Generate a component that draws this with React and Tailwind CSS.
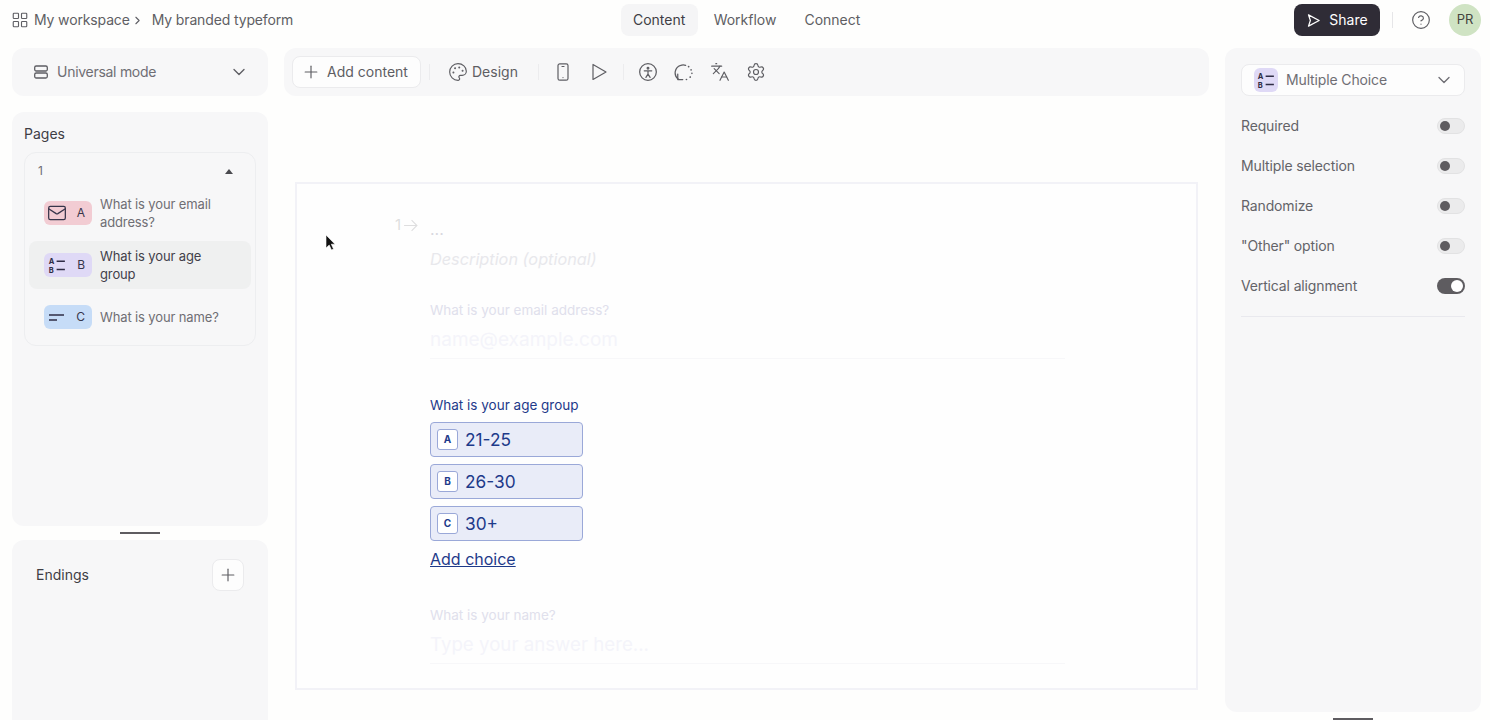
import { ChevronDown, ChevronRight, CircleHelp, Languages, LayoutGrid, Mail, Palette, Plus, Settings } from 'lucide-react';

const sans = 'font-["Inter",sans-serif]';

function AbIcon({ className = '' }) {
  return (
    <svg viewBox="0 0 24 24" className={className}>
      <text x="1" y="10.5" fontSize="10" fontWeight="700" fontFamily="Inter" fill="#2f2c45">A</text>
      <text x="1" y="22" fontSize="10" fontWeight="700" fontFamily="Inter" fill="#2f2c45">B</text>
      <path d="M11.5 7h11M11.5 18h11" stroke="#2f2c45" strokeWidth="1.9" />
    </svg>
  );
}

function PageRow({ color, letter, active, icon, children }) {
  return (
    <div className={`flex items-center gap-2 pl-[15px] pr-3 rounded-lg h-12 ${active ? 'bg-[#eff0f0] text-[#42404a]' : 'text-[#6f6e74]'}`}>
      <div className={`w-12 h-6 shrink-0 rounded-md flex items-center justify-between pl-[3px] pr-[7px] text-xs text-[#37354a] ${color}`}>
        {icon}
        <span>{letter}</span>
      </div>
      <span className="text-[13px] leading-[17.5px] tracking-[-0.01em] pt-px">{children}</span>
    </div>
  );
}

function Toggle({ label, on }) {
  return (
    <div className="flex items-center justify-between h-10 text-sm tracking-[-0.01em] text-[#636368]">
      <span>{label}</span>
      {on ? (
        <div className="w-7 h-4 rounded-full bg-[#5e5c60] flex items-center justify-end pr-[2px]">
          <div className="w-3 h-3 rounded-full bg-white" />
        </div>
      ) : (
        <div className="w-7 h-4 rounded-full bg-[#ebebec] border border-[#e2e2e3] flex items-center pl-[2px]">
          <div className="w-[10px] h-[10px] rounded-full bg-[#5e5c60]" />
        </div>
      )}
    </div>
  );
}

function Choice({ letter, children }) {
  return (
    <div className="w-[153px] h-[35px] rounded-[4px] border border-[#9aa8d8] bg-[#e9ecf8] flex items-center pl-[6px] gap-[7px] text-[#1e3a8a]">
      <span className="w-[21px] h-[21px] rounded-[3px] border border-[#9aa8d8] bg-white flex items-center justify-center text-[10px] font-bold">{letter}</span>
      <span className="text-[17.3px]">{children}</span>
    </div>
  );
}

function ToolDivider() {
  return <div className="w-px h-4 bg-[#ececee]" />;
}

export default function App() {
  return (
    <div className={`relative h-[720px] w-[1490px] overflow-hidden bg-[#fefefd] text-[#5e5e63] ${sans}`}>
      {/* top bar */}
      <header className="grid grid-cols-3 items-center h-10 mb-2 pl-3 pr-[9px]">
        <div className="flex items-center text-sm text-[#5f5f64] tracking-[-0.01em]">
          <LayoutGrid size={18} strokeWidth={1.5} className="mr-[5px] -ml-[1px]" />
          <span>My workspace</span>
          <ChevronRight size={13} strokeWidth={2} className="mx-[1px]" />
          <span className="ml-[7px]">My branded typeform</span>
        </div>
        <nav className="flex items-center justify-center gap-1 text-sm">
          <span className="h-8 w-[77px] justify-center rounded-lg bg-[#f5f5f6] flex items-center text-[#3f3e45]">Content</span>
          <span className="h-8 px-3 flex items-center">Workflow</span>
          <span className="h-8 px-3 flex items-center">Connect</span>
        </nav>
        <div className="flex items-center justify-end">
          <button className="h-8 w-[86px] rounded-lg bg-[#2f2c36] text-white text-sm flex items-center justify-center gap-2">
            <svg viewBox="0 0 24 24" className="w-[15px] h-[15px]" fill="none" stroke="currentColor" strokeWidth="2" strokeLinejoin="round">
              <path d="M4 3l17 9-17 9 3-9z" />
            </svg>
            Share
          </button>
          <div className="w-px h-4 bg-[#e6e6e8] ml-3 mr-[18px]" />
          <CircleHelp size={20} strokeWidth={1.4} className="mr-[18px]" />
          <div className="w-8 h-8 rounded-full bg-[#cfe3c3] text-[#44443f] text-[13px] flex items-center justify-center">PR</div>
        </div>
      </header>

      <div className="grid grid-cols-[256px_925px_256px] gap-4 pl-3">
        {/* left column */}
        <aside className="flex flex-col">
          <div className="h-12 rounded-xl bg-[#f7f7f8] flex items-center pl-[21px] pr-[19px] text-sm tracking-[-0.02em]">
            <svg viewBox="0 0 16 16" className="w-4 h-4 mr-2" fill="none" stroke="currentColor" strokeWidth="1.3">
              <rect x="1.7" y="2" width="12.6" height="5" rx="1.5" />
              <rect x="1.7" y="9" width="12.6" height="5" rx="1.5" />
            </svg>
            <span className="flex-1 text-[#6f6e74]">Universal mode</span>
            <ChevronDown size={20} strokeWidth={1.6} />
          </div>

          <div className="mt-4 h-[414px] rounded-xl bg-[#f7f7f8] p-3">
            <h2 className="text-sm leading-5 text-[#3f3e45] pb-2">Pages</h2>
            <div className="rounded-xl border border-[#edeef0] px-[4px] h-[194px]">
              <div className="flex items-center justify-between h-[36px] pl-[9px] pr-[18px] text-xs text-[#6f6e74]">
                <span>1</span>
                <span className="w-0 h-0 border-x-[4px] border-x-transparent border-b-[5px] border-b-[#4a4a4f]" />
              </div>
              <PageRow color="bg-[#f2ccd3]" letter="A" icon={<Mail size={20} strokeWidth={1.5} className="text-[#37354a]" />}>What is your email address?</PageRow>
              <div className="mt-1">
                <PageRow active color="bg-[#dfd9f6]" letter="B" icon={<AbIcon className="w-[18px] h-[18px] ml-[1px]" />}>What is your age group</PageRow>
              </div>
              <div className="mt-1">
                <PageRow color="bg-[#c6dcf7]" letter="C" icon={
                  <svg viewBox="0 0 20 20" className="w-5 h-5" stroke="#2f2c45" strokeWidth="1.4"><path d="M2 8h15M2 13h8" /></svg>
                }>What is your name?</PageRow>
              </div>
            </div>
          </div>

          <div className="h-[14px] flex items-center justify-center">
            <div className="w-10 h-[2px] bg-[#5e5c60]" />
          </div>

          <div className="h-[200px] rounded-xl bg-[#f7f7f8] pl-6 pr-6 pt-[19px]">
            <div className="flex items-center justify-between">
              <span className="text-sm text-[#3f3e45]">Endings</span>
              <button className="w-8 h-8 rounded-lg bg-[#fdfdfd] border border-[#ebebed] flex items-center justify-center">
                <Plus size={20} strokeWidth={1.4} />
              </button>
            </div>
          </div>
        </aside>

        {/* center */}
        <main className="flex flex-col">
          <div className="h-12 rounded-xl bg-[#f7f7f8] flex items-center pl-2 text-sm text-[#5e5e63]">
            <button className="h-8 w-[129px] rounded-lg bg-[#fdfdfd] border border-[#ebebed] flex items-center justify-center gap-[6px]">
              <Plus size={20} strokeWidth={1.4} className="-ml-1" />
              Add content
            </button>
            <div className="ml-2"><ToolDivider /></div>
            <Palette size={20} strokeWidth={1.4} className="ml-[18px]" />
            <span className="ml-[4px]">Design</span>
            <div className="ml-5"><ToolDivider /></div>
            <svg viewBox="0 0 20 20" className="w-5 h-5 ml-[14px]" fill="none" stroke="currentColor" strokeWidth="1.2" strokeLinecap="round">
              <rect x="5" y="1.8" width="10" height="16.4" rx="1.8" />
              <path d="M9 4.5h2M10 15.5v.1" />
            </svg>
            <svg viewBox="0 0 20 20" className="w-5 h-5 ml-4" fill="none" stroke="currentColor" strokeWidth="1.2" strokeLinejoin="round">
              <path d="M4 2.5v15L17 10z" />
            </svg>
            <div className="ml-[14px]"><ToolDivider /></div>
            <svg viewBox="0 0 24 24" className="w-5 h-5 ml-[14px]" fill="none" stroke="currentColor" strokeWidth="1.5" strokeLinecap="round">
              <circle cx="12" cy="12" r="10" />
              <circle cx="12" cy="7.5" r="1" fill="currentColor" />
              <path d="M7.5 10.5h9M12 11v3.5M12 14.5l-2.5 4M12 14.5l2.5 4" />
            </svg>
            <svg viewBox="0 0 24 24" className="w-5 h-5 ml-4" fill="none" stroke="currentColor" strokeWidth="1.5" strokeLinecap="round" strokeLinejoin="round">
              <path d="M5 20.5a9.5 9.5 0 0 1 3-16.5c2-.8 4-.8 6 0" />
              <path d="M4.5 14.5v6.5h6" />
              <path d="M17.5 5.5l.1.1M20.5 9.5v.1M21.5 13.5v.1M19.5 18l-.1.1M15 21h-.1" strokeWidth="2" />
            </svg>
            <Languages size={20} strokeWidth={1.4} className="ml-4" />
            <Settings size={20} strokeWidth={1.4} className="ml-4" />
          </div>

          {/* canvas */}
          <section className="mx-[11px] mt-[86px] h-[508px] border-2 border-[#f2f2f7] bg-[#fefefe] pl-[133px] pt-[30px]">
            <div className="relative text-[#d8d8de] leading-5 h-8 pt-[5px]">
              <span className="absolute -left-[35px] top-[1px] flex items-center text-[15px] text-[#dededf]">
                1<svg viewBox="0 0 14 14" className="w-[15px] h-[15px] ml-[2px]" fill="none" stroke="currentColor" strokeWidth="1"><path d="M1 7h12M8 2l5 5-5 5" /></svg>
              </span>
              ...
            </div>
            <p className="italic text-[16.3px] leading-5 mt-[3px] text-[#e8e8ec]">Description (optional)</p>
            <p className="text-[13.5px] leading-5 mt-[31px] text-[#e0e0ec]">What is your email address?</p>
            <p className="text-[19px] leading-7 mt-[6px] text-[#f4f4fa] w-[635px] border-b border-[#f7f7f9] pb-[4px]">name@example.com</p>

            <p className="text-[13.5px] leading-5 mt-[36px] text-[#1e3a8a]">What is your age group</p>
            <div className="flex flex-col gap-[7px] mt-[7px]">
              <Choice letter="A">21-25</Choice>
              <Choice letter="B">26-30</Choice>
              <Choice letter="C">30+</Choice>
            </div>
            <a className="block text-base leading-6 mt-[6px] underline text-[#1e3a8a]">Add choice</a>

            <p className="text-[13.5px] leading-5 mt-[34px] text-[#e0e0ec]">What is your name?</p>
            <p className="text-[18.7px] leading-7 mt-[6px] text-[#f4f4fa] w-[635px] border-b border-[#f7f7f9] pb-[4px]">Type your answer here...</p>
          </section>
        </main>

        {/* right column */}
        <aside>
          <div className="h-[664px] rounded-xl bg-[#f7f7f8] p-4">
            <div className="h-8 rounded-lg bg-[#fdfdfd] border border-[#ebebed] flex items-center pl-[12px] pr-[10px] text-sm tracking-[-0.01em] text-[#6f6e74]">
              <span className="w-6 h-6 rounded-md bg-[#dfd9f6] flex items-center justify-center mr-2">
                <AbIcon className="w-[18px] h-[18px]" />
              </span>
              <span className="flex-1">Multiple Choice</span>
              <ChevronDown size={20} strokeWidth={1.6} />
            </div>
            <div className="mt-[10px] pb-[10px] border-b border-[#e9e9ee]">
              <Toggle label="Required" />
              <Toggle label="Multiple selection" />
              <Toggle label="Randomize" />
              <Toggle label={'"Other" option'} />
              <Toggle label="Vertical alignment" on />
            </div>
          </div>
          <div className="mt-[6px] mx-auto w-10 h-[2px] bg-[#5e5c60]" />
        </aside>
      </div>

      {/* mouse pointer caught in the recording */}
      <svg viewBox="0 0 12 18" className="absolute left-[325px] top-[234px] w-3 h-[18px]">
        <path d="M1 1v13l3.2-3 2.3 5 2-1-2.2-4.8H10z" fill="#111" stroke="#fff" strokeWidth="0.6" />
      </svg>
    </div>
  );
}
